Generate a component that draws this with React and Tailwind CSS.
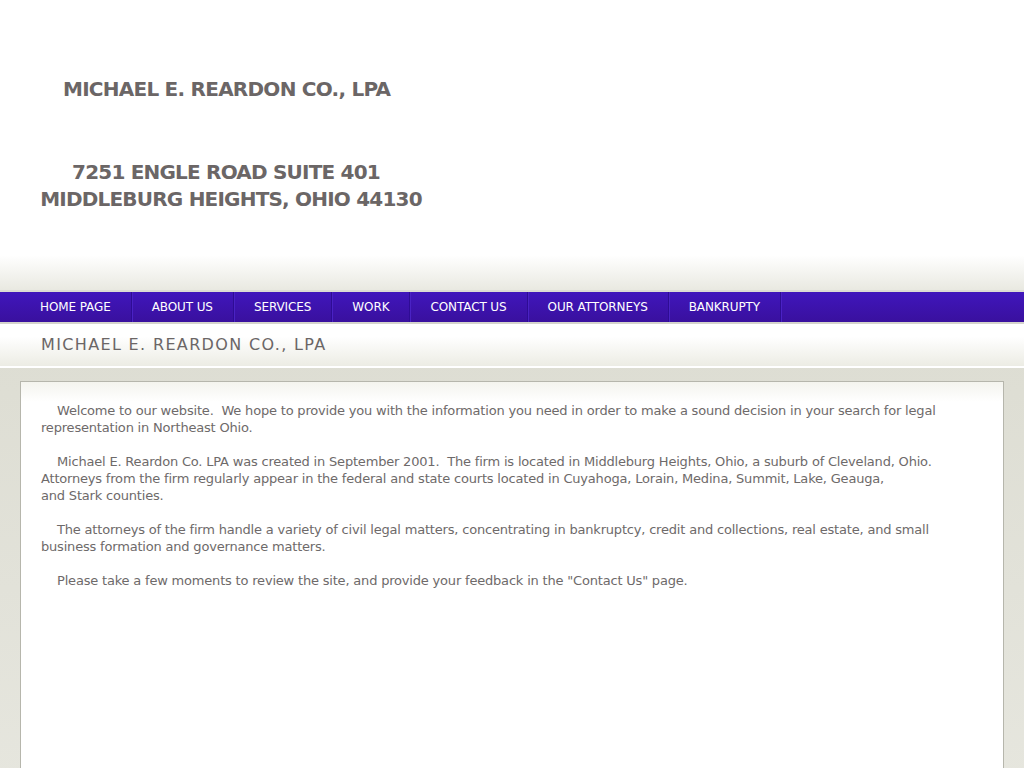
import React from 'react';

const navItems = ['HOME PAGE', 'ABOUT US', 'SERVICES', 'WORK', 'CONTACT US', 'OUR ATTORNEYS', 'BANKRUPTY'];

const paragraphs = [
    'Welcome to our website.\u00a0 We hope to provide you with the information you need in order to make a sound decision in your search for legal representation in Northeast Ohio.',
    null,
    'The attorneys of the firm handle a variety of civil legal matters, concentrating in bankruptcy, credit and collections, real estate, and small business formation and governance matters.',
    'Please take a few moments to review the site, and provide your feedback in the "Contact Us" page.',
];

const App = () => {
    return (
        <div className="min-h-[768px] bg-gradient-to-b from-[#d6d6ca] to-[#e6e6de] font-['DejaVu_Sans',sans-serif] overflow-hidden">
            {/* Header */}
            <div className="h-[292px] bg-gradient-to-b from-white from-[88%] to-[#e9e9e1] border-b-2 border-[#dcdcd4]">
                <div className="pt-[77px] pl-[63px] text-[20px] font-bold tracking-[-0.75px] text-[#6b6666] leading-[24px]">
                    MICHAEL E. REARDON CO., LPA
                </div>
                <div className="mt-[58px] w-[462px] text-center text-[20px] font-bold tracking-[-0.8px] text-[#6b6666] leading-[27px]">
                    <div className="pr-[10px]">7251 ENGLE ROAD SUITE 401</div>
                    <div>MIDDLEBURG HEIGHTS, OHIO 44130</div>
                </div>
            </div>

            {/* Nav */}
            <div className="h-[32px] bg-gradient-to-b from-[#4016bc] to-[#39109e] border-b-2 border-[#d4d4cc] flex pl-[20px]">
                {navItems.map(item => (
                    <div
                        key={item}
                        className="px-[20px] flex items-center text-[12px] tracking-[-0.1px] text-white border-r border-[#2e0c94] shadow-[1px_0_0_#4a22c4]"
                    >
                        {item}
                    </div>
                ))}
            </div>

            {/* Sub header */}
            <div className="h-[44px] bg-gradient-to-b from-white from-[30%] to-[#ecece4] border-b-2 border-white flex items-center pl-[41px]">
                <span className="text-[16px] tracking-[1.35px] text-[#6b6666]">MICHAEL E. REARDON CO., LPA</span>
            </div>

            {/* Content */}
            <div className="pt-[13px] px-[20px]">
                <div className="w-[984px] min-h-[400px] bg-gradient-to-b from-[#f4f4ee] to-white to-[20px] border border-[#b6b6ac] pt-[20px] px-[20px] text-[13px] tracking-[-0.19px] leading-[17px] text-[#6e6a6a]">
                    <p className="indent-[16px]">{paragraphs[0]}</p>
                    <br />
                    <p className="indent-[16px]">
                        Michael E. Reardon Co. LPA was created in September 2001.&nbsp; The firm is located in Middleburg Heights, Ohio, a suburb of Cleveland, Ohio.
                        <br />
                        Attorneys from the firm regularly appear in the federal and state courts located in Cuyahoga, Lorain, Medina, Summit, Lake, Geauga,
                        <br />
                        and Stark counties.
                    </p>
                    <br />
                    <p className="indent-[16px]">{paragraphs[2]}</p>
                    <br />
                    <p className="indent-[16px]">{paragraphs[3]}</p>
                </div>
            </div>
        </div>
    );
};

export default App;
